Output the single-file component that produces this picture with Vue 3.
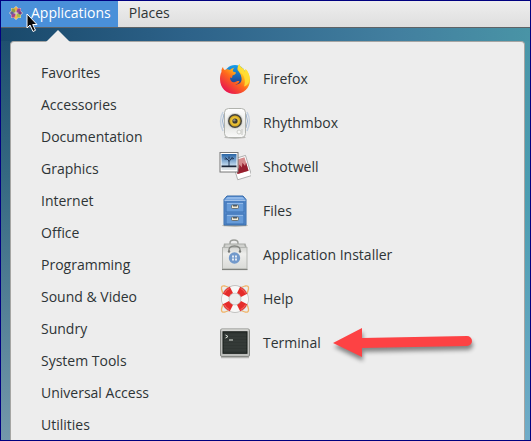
<script setup>
const categories = [
  'Favorites', 'Accessories', 'Documentation', 'Graphics', 'Internet', 'Office',
  'Programming', 'Sound & Video', 'Sundry', 'System Tools', 'Universal Access', 'Utilities',
]
const apps = ['Firefox', 'Rhythmbox', 'Shotwell', 'Files', 'Application Installer', 'Help', 'Terminal']
</script>

<template>
  <div class="desktop">
    <header class="topbar">
      <button class="top-item active" type="button">
        <svg class="logo" viewBox="0 0 14 14" aria-hidden="true">
          <path d="M7 0 9 2H12V5L14 7 12 9V12H9L7 14 5 12H2V9L0 7 2 5V2H5Z" fill="#e8dccb" />
          <path d="M2.400 2.400H6.500V6.500H2.400Z" fill="#8f9c45" />
          <path d="M7.500 2.400H11.600V6.500H7.500Z" fill="#9a3f91" />
          <path d="M2.400 7.500H6.500V11.600H2.400Z" fill="#a04490" />
          <path d="M7.500 7.500H11.600V11.600H7.500Z" fill="#a8bb4d" />
          <path d="M7 .600 8.800 2.800 7 5.500 5.200 2.800Z" fill="#efb03c" />
          <path d="M13.400 7 11.200 8.800 8.500 7 11.200 5.200Z" fill="#763a82" />
          <path d="M7 13.400 5.200 11.200 7 8.500 8.800 11.200Z" fill="#f0b84a" />
          <path d="M.600 7 2.800 5.200 5.500 7 2.800 8.800Z" fill="#655c9d" />
        </svg>
        <span>Applications</span>
      </button>
      <button class="top-item" type="button">Places</button>
    </header>

    <main class="menu">
      <svg class="pointer" viewBox="0 0 24 12" aria-hidden="true">
        <path d="M0 12 12 0 24 12Z" fill="#ededed" />
      </svg>
      <nav class="categories" aria-label="Categories">
        <button v-for="name in categories" :key="name" class="category" type="button">{{ name }}</button>
      </nav>
      <section class="apps" aria-label="Applications">
        <button v-for="name in apps" :key="name" class="app" type="button">
          <svg v-if="name === 'Firefox'" class="icon" viewBox="0 0 32 32" aria-hidden="true">
            <defs>
              <linearGradient id="fox" x1=".85" y1=".1" x2=".2" y2=".9">
                <stop offset="0" stop-color="#fff04a" />
                <stop offset=".3" stop-color="#ffb71b" />
                <stop offset=".55" stop-color="#ff6a1c" />
                <stop offset="1" stop-color="#e9184f" />
              </linearGradient>
              <linearGradient id="globe" x1="0" y1="0" x2="0" y2="1">
                <stop offset="0" stop-color="#16a0ee" />
                <stop offset="1" stop-color="#23307e" />
              </linearGradient>
            </defs>
            <circle cx="16" cy="13" r="11" fill="url(#globe)" />
            <path d="M4 4C4 5 4.500 6 5.500 7 7 6 9 6 11 7 12 5.500 14 5 15.500 4.500 14 6 13.500 7.500 14 8.500L17 9.500C17 11 15 12 13.500 12.500L13 15 11 14.500C11 18 13.500 20 16 19 18 18.500 19 17.500 20.500 18.500 19.500 20.500 17.500 21.500 16 21.500 21 21.500 23 19 22.500 15 22 11 20 9 18.500 7 18 5 19 2.500 20.500 1 20.500 3.500 22.500 4.500 24 5.500 25 6.500 25.500 7.500 26 9L26.500 6C29 8 31 12 31 17 31 25 24.500 31 16 31S1 25 1 16C1 13 1.500 10.500 2.500 9 2.300 7 2.800 5 4 4Z" fill="url(#fox)" />
            <path d="M20.500 1C20.500 3.500 22.500 4.500 24 5.500 25 6.500 25.500 7.500 26 9L26.500 6C30 10 31 14 30.500 18 29 22 27 23 25 23.500 27 18 25.500 13 22.500 10.500 18.500 8 18 4 20.500 1Z" fill="#ffe035" opacity=".85" />
          </svg>

          <svg v-else-if="name === 'Rhythmbox'" class="icon" viewBox="0 0 32 32" aria-hidden="true">
            <defs>
              <linearGradient id="box" x1="0" y1="0" x2="0" y2="1">
                <stop offset="0" stop-color="#fff" />
                <stop offset=".6" stop-color="#e4e5e2" />
                <stop offset="1" stop-color="#fafafa" />
              </linearGradient>
            </defs>
            <ellipse cx="16" cy="30.500" rx="11" ry="1.200" fill="#b5b5b3" />
            <path d="M4 5Q-1 14 4 24M28 5Q33 14 28 24" fill="none" stroke="#c4d1e0" stroke-width="1.500" />
            <path d="M5 7Q2 14 5 21M27 7Q30 14 27 21" fill="none" stroke="#9db3ce" stroke-width="1" />
            <rect x="5.500" y="1.500" width="21" height="29" rx="4" fill="url(#box)" stroke="#b1b3ae" />
            <circle cx="16" cy="14" r="8" fill="#d6d7d2" />
            <circle cx="16" cy="14" r="7" fill="#45443e" />
            <circle cx="16" cy="14" r="5.500" fill="#d9ad22" />
            <circle cx="16" cy="14" r="4.300" fill="#e8c23b" />
            <circle cx="16" cy="14" r="2.600" fill="#3d3a32" />
            <circle cx="15.300" cy="13.300" r="1.200" fill="#88867b" />
            <circle cx="20" cy="25" r="2" fill="#f7f7f5" stroke="#bdbfb9" stroke-width=".7" />
            <path d="M23 22V28" stroke="#c4c5c1" />
          </svg>

          <svg v-else-if="name === 'Shotwell'" class="icon" viewBox="0 0 32 32" aria-hidden="true">
            <defs>
              <linearGradient id="sky" x1="0" y1="0" x2="0" y2="1">
                <stop offset="0" stop-color="#2864a5" />
                <stop offset="1" stop-color="#c9e0f2" />
              </linearGradient>
            </defs>
            <g transform="rotate(-17 23 17)">
              <rect x="15.500" y="6" width="14.500" height="21" fill="#fff" stroke="#999" stroke-width=".7" />
              <rect x="17" y="7.500" width="11.500" height="14" fill="#d58b8c" />
              <path d="M17 21.500V16L18.500 14 20 17 21.500 13 23 16.500 25 12 26.500 16 28.500 13V21.500Z" fill="#961f2e" />
            </g>
            <rect x="1" y="1.500" width="18" height="19.500" fill="#fff" stroke="#777" />
            <rect x="2.500" y="3" width="15" height="12" fill="url(#sky)" />
            <rect x="2.500" y="14.500" width="15" height="2" fill="#182538" />
            <rect x="2.500" y="16.500" width="15" height="2.500" fill="#dce3e8" />
            <path d="M10 15V10L6.500 6.500M10 10.500 13.500 6M10 8.500V5.500M12.500 8 15 7.500M8 8H5.500" fill="none" stroke="#172b4b" stroke-width=".9" />
          </svg>

          <svg v-else-if="name === 'Files'" class="icon" viewBox="0 0 32 32" aria-hidden="true">
            <ellipse cx="16" cy="30.500" rx="13" ry="1.200" fill="#aaa99f" />
            <path d="M8 1H24L27 4.500V30H5V4.500Z" fill="#5c91d2" stroke="#356aab" />
            <path d="M8.500 2H23.500L26 4.500H6Z" fill="#8fb7e8" />
            <path d="M5.500 5.500H26.500" stroke="#9fc0e8" />
            <g v-for="y in [7, 19]" :key="y">
              <rect x="7" :y="y" width="18" height="10" fill="#669bd9" stroke="#3b70b2" />
              <path :d="`M8 ${y + 1.5}H24`" stroke="#91b9e9" />
              <rect x="12.500" :y="y + 3" width="7" height="3.500" rx="1" fill="#f1ead5" stroke="#59605e" stroke-width=".8" />
              <rect x="14" :y="y + 3" width="4" height="1.500" fill="#515a61" />
            </g>
          </svg>

          <svg v-else-if="name === 'Application Installer'" class="icon" viewBox="0 0 32 32" aria-hidden="true">
            <defs>
              <linearGradient id="bag" x1="0" y1="0" x2="0" y2="1">
                <stop offset="0" stop-color="#d4d5d2" />
                <stop offset=".3" stop-color="#eeeeec" />
                <stop offset="1" stop-color="#d9dad7" />
              </linearGradient>
            </defs>
            <path d="M11 6V4Q11 1 15 1T19 4V6" fill="none" stroke="#9a9c98" stroke-width="1.400" />
            <path d="M5 4.500H26.500L28 9H4Z" fill="#a9aba7" />
            <path d="M6.500 5.500H25L26 8H6Z" fill="#d0d1ce" />
            <rect x="3.500" y="8.500" width="24.500" height="21.500" fill="url(#bag)" stroke="#b5b7b3" />
            <path d="M3 30.500H28.500" stroke="#80827e" stroke-width="1.200" />
            <path d="M10 13Q9 7 15.500 7T21 13" fill="none" stroke="#858783" stroke-width="1.400" />
            <circle cx="10" cy="12.500" r="1.200" fill="#777975" />
            <circle cx="21" cy="12.500" r="1.200" fill="#777975" />
            <circle cx="15.500" cy="19" r="5.700" fill="#7299cb" />
            <path d="M13 16.500H15V18.500H13ZM16 16.500H18V18.500H16ZM13 19.500H15V21.500H13ZM16 19.500H18V21.500H16Z" fill="#e1e9f3" />
          </svg>

          <svg v-else-if="name === 'Help'" class="icon" viewBox="0 0 32 32" aria-hidden="true">
            <path d="M4 11 2.500 6Q2 2 6 3L10 4.500M22 4.500 26 3Q30 2 29.500 6L28 11M4 21 2.500 26Q2 30 6 29L10 27.500M22 27.500 26 29Q30 30 29.500 26L28 21" fill="none" stroke="#f0b469" stroke-width="1.300" />
            <circle cx="16" cy="16" r="9.700" fill="none" stroke="#b5b4b2" stroke-width="8" />
            <circle cx="16" cy="16" r="9.700" fill="none" stroke="#f8f8f7" stroke-width="6.800" />
            <g v-for="turn in [45, 135, 225, 315]" :key="turn" :transform="`rotate(${turn} 16 16)`">
              <path d="M11 3.700Q16 1.800 21 3.700L18.800 10.300Q16 9.100 13.200 10.300Z" fill="#e52d2b" />
              <path d="M12.500 4.500Q16 3.200 19.500 4.500" fill="none" stroke="#f5665f" />
            </g>
          </svg>

          <svg v-else class="icon" viewBox="0 0 32 32" aria-hidden="true">
            <path d="M2 30.500H30" stroke="#b4b4b2" stroke-width="1.500" />
            <rect x="1.500" y="2" width="29" height="27.500" rx="1.500" fill="#bdbebb" stroke="#868884" />
            <path d="M2.500 3H29.500" stroke="#ecece9" />
            <rect x="4" y="4.800" width="24" height="21.500" fill="#303633" stroke="#171c19" />
            <path d="M4.500 8H27.500M4.500 11H27.500M4.500 14H27.500M4.500 17H27.500M4.500 20H27.500M4.500 23H27.500" stroke="#3c443f" stroke-width=".7" />
            <path d="M6.500 8 9 9.500 6.500 11M10 13H14" fill="none" stroke="#e1e6df" stroke-width="1" />
          </svg>
          <span>{{ name }}</span>
        </button>
      </section>
    </main>

    <svg class="callout" viewBox="0 0 148 44" aria-hidden="true">
      <path d="M4 20 33 5V15L138 13A5 5 0 0 1 138 23L33 25V34Z" fill="#fd4244" />
    </svg>
    <svg class="cursor" viewBox="0 0 12 20" aria-hidden="true">
      <path d="M1 1V15L4 12 7 18.500 9.500 17.300 6.700 11.500H11Z" fill="#080808" stroke="#fff" stroke-width="1" />
    </svg>
  </div>
</template>

<style>
body { margin: 0; }
</style>

<style scoped>
.desktop {
  position: relative;
  display: flex;
  flex-direction: column;
  box-sizing: border-box;
  height: 100vh;
  overflow: hidden;
  border: 1px solid #000080;
  color: #2e3436;
  font: 14px/20px "Open Sans", "Noto Sans", sans-serif;
  background:
    linear-gradient(90deg, #19496b 0, #2d6289 35%, #427f9f 75%, #4994a6 100%) top / 100% 40px no-repeat,
    linear-gradient(#4994a6, #4b9db1 45%, #70acc8) right / 50% 100% no-repeat,
    linear-gradient(#19496b, #356982 40%, #7398ab);
}
button {
  border: 0;
  padding: 0;
  background: none;
  color: inherit;
  font: inherit;
  text-align: left;
}
.topbar {
  display: flex;
  flex: none;
  height: 26px;
  border-bottom: 1px solid #5e6366;
  background: linear-gradient(#eeeeee, #dedede);
}
.top-item {
  display: flex;
  align-items: center;
  padding: 0 11px 2px;
}
.top-item.active {
  gap: 8px;
  padding: 0 7px 2px 8px;
  background: #4a90d9;
  color: #fff;
}
.logo { width: 14px; height: 14px; }
.menu {
  position: relative;
  display: grid;
  grid-template-columns: 178px 1fr;
  flex: 1 0 auto;
  align-items: start;
  margin: 13px 5px 0 9px;
  padding: 15px 12px 0 30px;
  border: 1px solid #a5a5a3;
  border-bottom: 0;
  border-radius: 4px 4px 0 0;
  background: #ededed;
}
.pointer {
  position: absolute;
  top: -12px;
  left: 35px;
  width: 24px;
  height: 12px;
}
.categories, .apps { display: flex; flex-direction: column; }
.category { height: 32px; }
.app {
  display: flex;
  align-items: center;
  gap: 12px;
  height: 44px;
}
.icon { flex: none; width: 32px; height: 32px; }
.callout {
  position: absolute;
  top: 322px;
  left: 328px;
  width: 148px;
  height: 44px;
  filter: drop-shadow(1px 4px 2px #00000070);
}
.cursor {
  position: absolute;
  top: 12px;
  left: 25px;
  width: 12px;
  height: 20px;
}
</style>
